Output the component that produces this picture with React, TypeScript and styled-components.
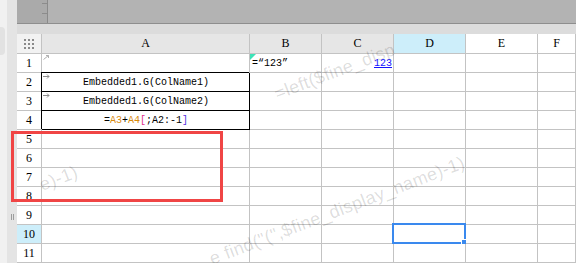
import React from "react";
import styled, { createGlobalStyle, css } from "styled-components";

const GlobalStyle = createGlobalStyle`
  html, body {
    margin: 0;
    padding: 0;
    background: #ffffff;
    overflow: hidden;
  }
`;

const Frame = styled.div`
  position: relative;
  display: flex;
  width: 576px;
  height: 263px;
  overflow: hidden;
  font-family: "Liberation Serif", serif;
`;

const Gutter = styled.div`
  display: flex;
  width: 17px;
  flex: none;
`;
const GutterEdge = styled.div`
  width: 7px;
  padding-top: 27px;
  background: #f1f1f1;
`;
const GutterTab = styled.div`
  width: 5px;
  height: 28px;
  background: #e2e2e2;
  border-radius: 0 4px 4px 0;
`;
const GutterRail = styled.div`
  display: flex;
  flex-direction: column;
  align-items: center;
  width: 10px;
  padding-top: 214px;
  background: #e4e4e4;
`;
const Grip = styled.div`
  width: 1px;
  height: 6px;
  border-left: 1px solid #9c9c9c;
  border-right: 1px solid #9c9c9c;
`;

const Main = styled.div`
  display: flex;
  flex-direction: column;
  flex: 1;
  min-width: 0;
`;
const TopBar = styled.div`
  display: flex;
  height: 24px;
  box-sizing: border-box;
  background: #b3b3b3;
  border-bottom: 1px solid #8e8e8e;
`;
const Ruler = styled.div`
  display: flex;
  flex-direction: column;
  align-items: flex-end;
  gap: 9px;
  width: 31px;
  box-sizing: border-box;
  padding-top: 3px;
  background: #aaaaaa;
  border-right: 1px solid #8a8a8a;
`;
const Tick = styled.div`
  width: 5px;
  height: 1px;
  background: #8c8c8c;
`;
const Band = styled.div`
  height: 10px;
  background: #dcdcdc;
`;

const Sheet = styled.div`
  display: grid;
  grid-template-columns: 25px 208px 72px 72px 72px 72px 1fr;
  grid-template-rows: 20px repeat(11, 19px);
`;

type Tone = "gray" | "white" | "active" | "corner";
const toneBg: Record<Tone, string> = {
  gray: "#e6e6e6",
  white: "#ffffff",
  active: "#cdeefa",
  corner: "#f2f2f2",
};

const HeadCell = styled.div<{ $tone: Tone }>`
  display: flex;
  align-items: center;
  justify-content: center;
  box-sizing: border-box;
  border-right: 1px solid #c3c3c3;
  border-bottom: 1px solid #c3c3c3;
  background: ${(p) => toneBg[p.$tone]};
  color: #000;
  font-family: "Liberation Serif", serif;
  font-size: 12px;
`;

const Cell = styled.div<{ $boxed?: boolean; $align?: "left" | "center" | "right" }>`
  position: relative;
  display: flex;
  align-items: center;
  justify-content: ${(p) =>
    p.$align === "center" ? "center" : p.$align === "right" ? "flex-end" : "flex-start"};
  box-sizing: border-box;
  padding: 1px 1px 0 2px;
  border-right: 1px solid #c3c3c3;
  border-bottom: 1px solid #c3c3c3;
  background: #ffffff;
  font-family: "Liberation Mono", "Courier New", monospace;
  font-size: 10px;
  color: #000;
  white-space: nowrap;
  ${(p) =>
    p.$boxed &&
    css`
      border-right-color: #000;
      border-bottom-color: #000;
      box-shadow: -1px -1px 0 0 #000;
    `}
`;

const CornerMark = styled.span`
  position: absolute;
  left: 1px;
  top: 1px;
  display: flex;
`;

const Flag = styled.span`
  position: absolute;
  left: 0;
  top: 0;
  width: 0;
  height: 0;
  border-top: 6px solid #3de3b8;
  border-right: 6px solid transparent;
`;

const LinkText = styled.span`
  color: #1414ff;
  text-decoration: underline;
`;

const Tint = styled.span<{ $c: string }>`
  color: ${(p) => p.$c};
`;

const Selection = styled.div`
  position: absolute;
  inset: -2px -1px -1px -2px;
  border: 2px solid #3a89ee;
  pointer-events: none;
`;
const Handle = styled.div`
  position: absolute;
  right: -4px;
  bottom: -4px;
  width: 5px;
  height: 5px;
  background: #3a89ee;
  border: 1px solid #fff;
  box-sizing: content-box;
`;

const RedBox = styled.div`
  position: absolute;
  left: 11px;
  top: 131px;
  width: 212px;
  height: 71px;
  box-sizing: border-box;
  border: 3.5px solid #f04545;
  pointer-events: none;
`;

const Watermark = styled.span<{ $x: number; $y: number }>`
  position: absolute;
  left: ${(p) => p.$x}px;
  top: ${(p) => p.$y - 14}px;
  line-height: 18px;
  font-family: "Liberation Sans", Arial, sans-serif;
  font-size: 18px;
  letter-spacing: 0.3px;
  color: rgba(0, 0, 0, 0.14);
  white-space: nowrap;
  transform: rotate(-21deg);
  transform-origin: 0 14px;
  pointer-events: none;
`;

const GridIcon = () => (
  <svg width="10" height="10" viewBox="0 0 10 10">
    {[0, 4, 8].map((y) =>
      [0, 4, 8].map((x) => <rect key={`${x}-${y}`} x={x} y={y} width="2" height="2" fill="#8a8a8a" />)
    )}
  </svg>
);

const ArrowIcon = ({ hook }: { hook?: boolean }) => (
  <svg width="7" height="5" viewBox="0 0 7 5">
    {hook ? (
      <path d="M0.5 4.5 L5.5 0.5 M3 0.5 H5.5 V3" stroke="#b0b0b0" strokeWidth="1" fill="none" />
    ) : (
      <path d="M0 2.5 H6 M4 0.5 L6 2.5 L4 4.5" stroke="#8c8c8c" strokeWidth="1" fill="none" />
    )}
  </svg>
);

const columns = ["A", "B", "C", "D", "E", "F"];
const colTone: Tone[] = ["gray", "gray", "gray", "active", "white", "white"];

const formula = (
  <>
    =<Tint $c="#d98a0c">A3</Tint>+<Tint $c="#d98a0c">A4</Tint>
    <Tint $c="#e0308c">[</Tint>;A2:-1<Tint $c="#5533e0">]</Tint>
  </>
);

type CellSpec = { content?: React.ReactNode; boxed?: boolean; align?: "left" | "center" | "right"; mark?: "hook" | "arrow"; flag?: boolean };

const cellsFor = (row: number): CellSpec[] => {
  const blank: CellSpec[] = columns.map(() => ({}));
  if (row === 1) {
    blank[0] = { mark: "hook" };
    blank[1] = { content: "=\u201c123\u201d", flag: true };
    blank[2] = { content: <LinkText>123</LinkText>, align: "right" };
  }
  if (row === 2) blank[0] = { content: "Embedded1.G(ColName1)", boxed: true, align: "center", mark: "arrow" };
  if (row === 3) blank[0] = { content: "Embedded1.G(ColName2)", boxed: true, align: "center", mark: "arrow" };
  if (row === 4) blank[0] = { content: formula, boxed: true, align: "center" };
  return blank;
};

const rows = Array.from({ length: 11 }, (_, i) => i + 1);

const App = () => {
  return (
    <Frame>
      <GlobalStyle />
      <Gutter>
        <GutterEdge>
          <GutterTab />
        </GutterEdge>
        <GutterRail>
          <Grip />
        </GutterRail>
      </Gutter>
      <Main>
        <TopBar>
          <Ruler>
            <Tick />
            <Tick />
          </Ruler>
        </TopBar>
        <Band />
        <Sheet>
          <HeadCell $tone="corner">
            <GridIcon />
          </HeadCell>
          {columns.map((c, i) => (
            <HeadCell key={c} $tone={colTone[i]}>
              {c}
            </HeadCell>
          ))}
          {rows.map((r) => (
            <React.Fragment key={r}>
              <HeadCell $tone={r === 10 ? "active" : "white"}>{r}</HeadCell>
              {cellsFor(r).map((spec, ci) => (
                <Cell key={ci} $boxed={spec.boxed} $align={spec.align}>
                  {spec.flag && <Flag />}
                  {spec.mark && (
                    <CornerMark>
                      <ArrowIcon hook={spec.mark === "hook"} />
                    </CornerMark>
                  )}
                  {spec.content}
                  {r === 10 && ci === 3 && (
                    <Selection>
                      <Handle />
                    </Selection>
                  )}
                </Cell>
              ))}
            </React.Fragment>
          ))}
        </Sheet>
      </Main>
      <Watermark $x={277} $y={99}>=left($fine_disp</Watermark>
      <Watermark $x={42} $y={190}>e)-1)</Watermark>
      <Watermark $x={212} $y={264}>e find("(",$fine_display_name)-1)</Watermark>
      <RedBox />
    </Frame>
  );
};

export default App;
